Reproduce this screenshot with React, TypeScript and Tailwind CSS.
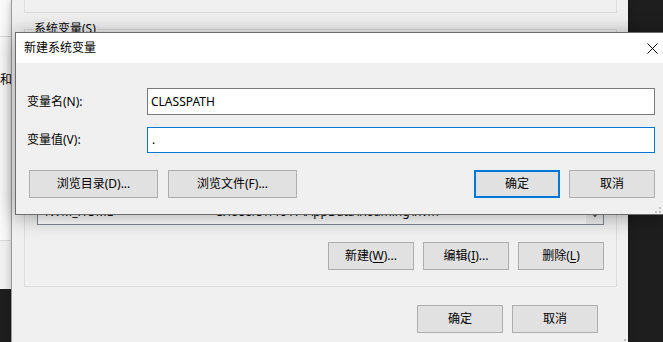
import React from "react";

function Btn({
  className,
  children,
  def,
}: {
  className: string;
  children: React.ReactNode;
  def?: boolean;
}) {
  return (
    <div
      className={
        "h-[28px] flex items-center justify-center bg-[#e1e1e1] leading-none whitespace-nowrap " +
        (def ? "border-2 border-[#0078d7] " : "border border-[#adadad] ") +
        className
      }
    >
      {children}
    </div>
  );
}

const rows: [string, string][] = [
  ["ComSpec", "C:\\WINDOWS\\system32\\cmd.exe"],
  ["DriverData", "C:\\Windows\\System32\\Drivers\\DriverData"],
  ["JAVA_HOME", "C:\\Program Files\\Java\\jdk1.8.0_201"],
  ["NUMBER_OF_PROCESSORS", "8"],
  ["NVM_HOME", "C:\\Users\\11917\\AppData\\Roaming\\nvm"],
];

export default function App() {
  return (
    <div className="relative w-[663px] h-[342px] overflow-hidden bg-[#1e1e1e] text-[12px] text-black font-['Noto_Sans','Noto_Sans_CJK_SC',sans-serif]">
      {/* window behind on the left */}
      <div className="absolute left-0 top-0 w-[11px] h-[289px] bg-[#f9f9f9] flex flex-col overflow-hidden">
        <div className="h-[37px] border-b border-[#d9d9d9] shrink-0" />
        <div className="mt-[36px] flex justify-end whitespace-nowrap leading-[14px] -mr-[1px]">
          变量和
        </div>
        <div className="flex-1" />
        <div className="h-[49px] border-t border-[#dcdcdc] bg-[#f0f0f0] shrink-0" />
      </div>

      {/* main window */}
      <div className="absolute left-[11px] top-0 w-[617px] h-[342px] bg-[#f0f0f0] border-l border-[#9a9a9a] shadow-[0_0_8px_rgba(0,0,0,0.25)]">
        <div className="ml-[12px] w-[593px] h-[13px] border-x border-b border-[#dcdcdc]" />
        <div className="relative ml-[12px] mt-[16px] w-[593px] border border-[#dcdcdc] px-[12px] pt-[18px] pb-[16px]">
          <div className="absolute left-[8px] -top-[8px] px-[1px] bg-[#f0f0f0] leading-[14px]">
            系统变量(S)
          </div>
          <div className="h-[177px] w-[567px] border border-[#828790] bg-white flex overflow-hidden">
            <div className="flex-1 flex flex-col justify-end overflow-hidden pb-[4px]">
              {rows.map(([k, v]) => (
                <div key={k} className="h-[17px] shrink-0 flex items-center whitespace-nowrap leading-none">
                  <div className="w-[177px] pl-[7px]">{k}</div>
                  <div>{v}</div>
                </div>
              ))}
            </div>
            <div className="w-[17px] bg-[#f0f0f0] flex flex-col justify-end">
              <div className="h-[17px] flex items-center justify-center">
                <svg width="8" height="5" viewBox="0 0 8 5">
                  <path d="M0 0 L8 0 L4 4.5 Z" fill="#606060" />
                </svg>
              </div>
            </div>
          </div>
          <div className="mt-[17px] flex justify-end gap-[9px]">
            <Btn className="w-[86px]">
              新建(<span className="underline underline-offset-2">W</span>)...
            </Btn>
            <Btn className="w-[86px]">
              编辑(<span className="underline underline-offset-2">I</span>)...
            </Btn>
            <Btn className="w-[86px]">
              删除(<span className="underline underline-offset-2">L</span>)
            </Btn>
          </div>
        </div>
        <div className="mt-[18px] flex justify-end gap-[9px] pr-[30px]">
          <Btn className="w-[86px]">确定</Btn>
          <Btn className="w-[86px]">取消</Btn>
        </div>
        <div className="absolute left-[612px] top-[339px] w-[2px] h-[2px] bg-[#bdbdbd]" />
      </div>

      {/* dialog */}
      <div className="absolute left-[15px] top-[32px] w-[652px] h-[183px] border border-[#6d6d6d] bg-[#f0f0f0] shadow-[0_2px_20px_rgba(0,0,0,0.35)] flex flex-col">
        <div className="h-[30px] shrink-0 bg-white flex items-center pl-[8px]">
          <span className="flex-1 leading-none">新建系统变量</span>
          <svg width="11" height="11" viewBox="0 0 11 11" className="mr-[8px]">
            <path d="M0.5 0.5 L10.5 10.5 M10.5 0.5 L0.5 10.5" stroke="#000" strokeWidth="1" />
          </svg>
        </div>
        <div className="relative flex-1 pl-[11px] pr-[11px] pt-[25px] pb-[16px]">
          <div className="flex items-center h-[27px]">
            <div className="w-[120px] leading-none">变量名(N):</div>
            <div className="w-[508px] h-[27px] border border-[#7a7a7a] bg-white pl-[3px] flex items-center leading-none">
              CLASSPATH
            </div>
          </div>
          <div className="mt-[12px] flex items-center h-[26px]">
            <div className="w-[120px] leading-none">变量值(V):</div>
            <div className="w-[508px] h-[26px] border border-[#0078d7] bg-white pl-[4px] flex items-center leading-none">
              .
            </div>
          </div>
          <div className="mt-[17px] flex items-center">
            <div className="ml-[2px] flex gap-[10px]">
              <Btn className="w-[129px]">浏览目录(D)...</Btn>
              <Btn className="w-[129px]">浏览文件(F)...</Btn>
            </div>
            <div className="ml-auto flex gap-[9px]">
              <Btn def className="w-[86px]">确定</Btn>
              <Btn className="w-[86px]">取消</Btn>
            </div>
          </div>
          <svg width="12" height="12" viewBox="0 0 12 12" className="absolute right-0 bottom-0">
            <rect x="9" y="1" width="2" height="2" fill="#c2c2c2" />
            <rect x="5" y="5" width="2" height="2" fill="#c2c2c2" />
            <rect x="9" y="5" width="2" height="2" fill="#c2c2c2" />
            <rect x="1" y="9" width="2" height="2" fill="#c2c2c2" />
            <rect x="5" y="9" width="2" height="2" fill="#c2c2c2" />
            <rect x="9" y="9" width="2" height="2" fill="#c2c2c2" />
          </svg>
        </div>
      </div>
    </div>
  );
}
